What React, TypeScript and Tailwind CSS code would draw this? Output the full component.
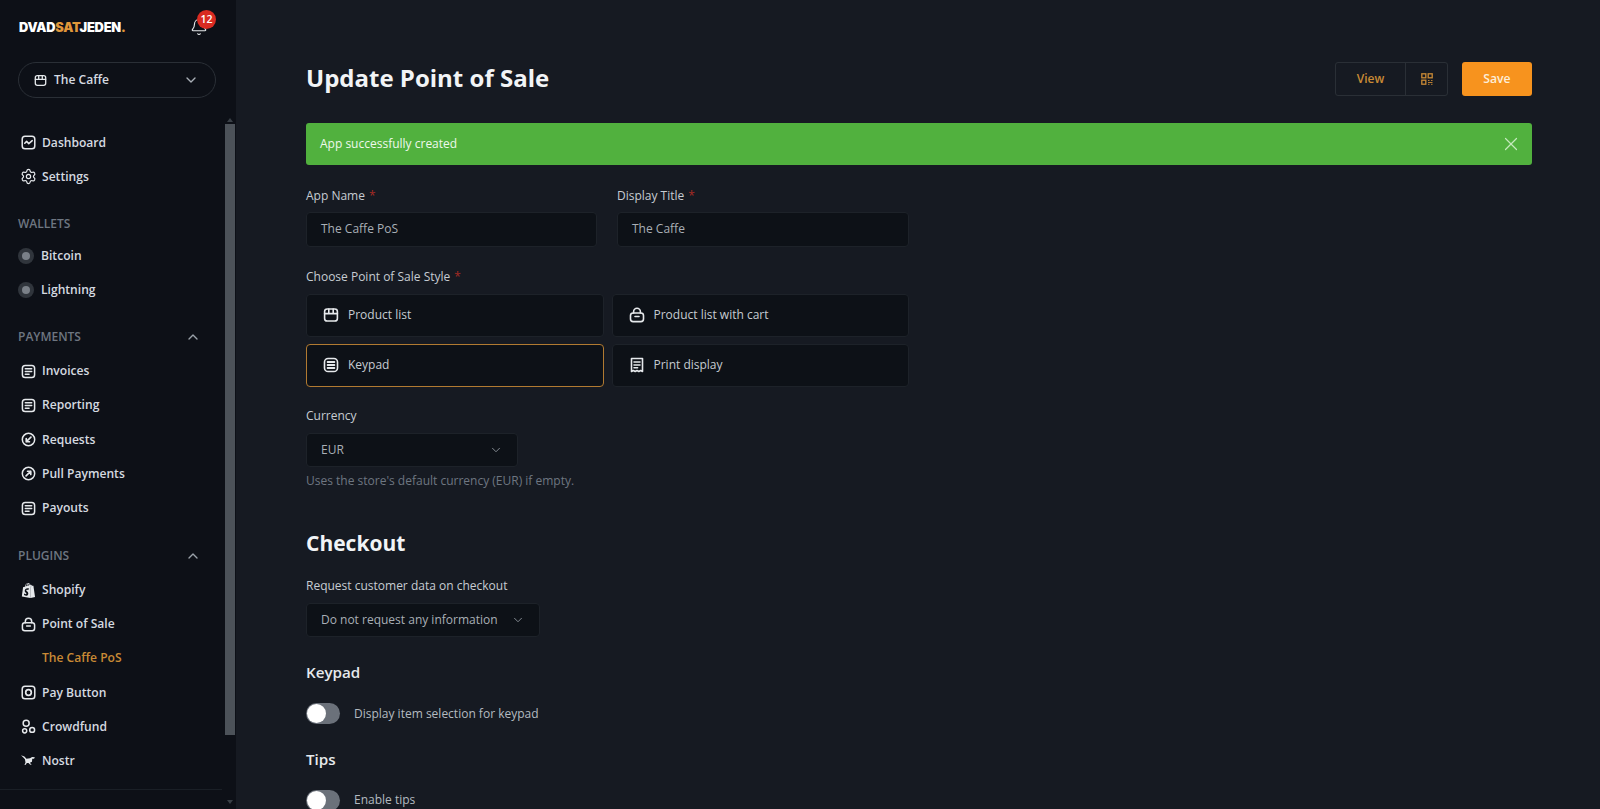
import { Bell, ChevronDown, ChevronUp, Settings, X } from "lucide-react";
import { SiShopify } from "react-icons/si";
import type { ReactNode } from "react";

type IP = { className?: string };
const S = ({ className, children }: IP & { children: ReactNode }) => (
  <svg viewBox="0 0 16 16" fill="none" stroke="currentColor" strokeWidth="1.6" strokeLinecap="round" strokeLinejoin="round" className={className}>{children}</svg>
);
const Dash = (p: IP) => <S {...p}><rect x="1.3" y="1.3" width="13.4" height="13.4" rx="3" /><path d="M4 8.8l2-2 2.3 2.4L12 6" /></S>;
const Doc = (p: IP) => <S {...p}><rect x="1.5" y="1.5" width="13" height="13" rx="3" /><path d="M4.6 5h6.8M4.6 8h6.8M4.6 11h4" /></S>;
const ReqI = (p: IP) => <S {...p}><circle cx="8" cy="8" r="6.6" /><path d="M10.6 5.4L5.6 10.4M5.6 7v3.4H9" strokeWidth="1.8" /></S>;
const PullI = (p: IP) => <S {...p}><circle cx="8" cy="8" r="6.6" /><path d="M5.4 10.6l5-5M7 5.6h3.4V9" strokeWidth="1.8" /></S>;
const Bag = (p: IP) => <S {...p}><rect x="1.5" y="6" width="13" height="8.6" rx="2.6" /><path d="M4.6 6V4.7a3.4 3.4 0 0 1 6.8 0V6M6 9.5h4" /></S>;
const PayB = (p: IP) => <S {...p}><rect x="1.3" y="1.3" width="13.4" height="13.4" rx="3" /><circle cx="8" cy="8" r="3" strokeWidth="1.8" /></S>;
const Crowd = (p: IP) => <S {...p}><circle cx="5.5" cy="4.4" r="3.2" /><circle cx="3.9" cy="12.6" r="2.2" /><circle cx="11.9" cy="11.6" r="2.6" /></S>;
const Ostrich = (p: IP) => (
  <svg viewBox="0 0 16 16" fill="currentColor" className={p.className}>
    <path d="M0 2.5l3.6 1.2 2.2 2.4 3.8-.6 2.2-1.3 3 0.4-.9 1.4-1.9.2-.3 3-2.2 1.3 1.9 2.2-1.8-.4-1.6-1.7-1.8 0-1.1 1.8-1.4.3 1.1-2.6-.6-3.4L3 5.4z" />
  </svg>
);
const Store = (p: IP) => <S {...p}><rect x="1.6" y="2" width="12.8" height="12" rx="2.6" /><path d="M1.6 6.6h12.8M5.8 2v4.6M10.2 2v4.6" /></S>;
const KeyI = (p: IP) => <S {...p}><rect x="1.5" y="1.5" width="13" height="13" rx="3.6" /><path d="M4.6 5h6.8M4.6 8h6.8M4.6 11h6.8" strokeWidth="1.8" /></S>;
const Print = (p: IP) => <S {...p}><path d="M2.5 14.5V1.5h11v13l-1.8-1-1.9 1-1.8-1-1.8 1-1.9-1z" /><path d="M5 5h6M5 8h6M5 10.8h3.6" /></S>;
const Qr = (p: IP) => (
  <svg viewBox="0 0 12 12" fill="none" stroke="currentColor" strokeWidth="1.3" className={p.className}>
    <rect x="0.8" y="0.8" width="4" height="4" /><rect x="7.2" y="0.8" width="4" height="4" /><rect x="0.8" y="7.2" width="4" height="4" />
    <path d="M7 7.5h1.5M10 7.5h1.5M7 9.5h4.5M7 11.3h1.5M10 11.3h1.5" strokeWidth="0.9" />
  </svg>
);

function Row({ icon, children, gold, tight }: { icon?: ReactNode; children: ReactNode; gold?: boolean; tight?: boolean }) {
  return (
    <div className={`${tight ? "h-[34.1px]" : "h-[34.25px]"} flex items-center gap-[6px] text-[12.1px] font-semibold ${gold ? "text-[#c98a35] pl-[42px]" : "text-[#d5dae0] pl-[21px]"}`}>
      {icon && <span className="w-[15px] h-[15px] flex items-center justify-center text-[#e6e9ec]">{icon}</span>}
      {children}
    </div>
  );
}
function Wallet({ children }: { children: ReactNode }) {
  return (
    <div className="h-[33.5px] flex items-center gap-[7px] pl-[18px] text-[12.1px] font-semibold text-[#d5dae0]">
      <span className="w-[16px] h-[16px] rounded-full bg-[#30353c] flex items-center justify-center"><span className="w-[8px] h-[8px] rounded-full bg-[#7a8088]" /></span>
      {children}
    </div>
  );
}
function Head({ children, chev, className }: { children: ReactNode; chev?: boolean; className?: string }) {
  return (
    <div className={`h-[20px] flex items-center justify-between pl-[18px] pr-[23px] text-[12px] font-semibold text-[#6e7681] ${className ?? ""}`}>
      <span>{children}</span>
      {chev && <ChevronUp className="w-[16px] h-[16px] text-[#9aa1a9]" strokeWidth={2} />}
    </div>
  );
}
const Req = () => <span className="text-[#a52a24] ml-[4px]">*</span>;
const Label = ({ children }: { children: ReactNode }) => <div className="text-[12px] leading-[18px] text-[#c6ccd2]">{children}</div>;
const Field = ({ children, className }: { children: ReactNode; className?: string }) => (
  <div className={`h-[34.5px] rounded-[4px] bg-[#0d1117] border border-[#1d2229] flex items-center pl-[14px] text-[12px] text-[#a9afb6] whitespace-nowrap ${className ?? ""}`}>{children}</div>
);
function Card({ icon, children, active }: { icon: ReactNode; children: ReactNode; active?: boolean }) {
  return (
    <div className={`h-[43px] rounded-[4px] bg-[#0d1117] border flex items-center gap-[9px] pl-[16px] text-[12px] text-[#c6ccd2] ${active ? "border-[#b17a31]" : "border-[#1d2229]"}`}>
      <span className="w-[16px] h-[16px] text-[#e6e9ec]">{icon}</span>{children}
    </div>
  );
}
function Toggle({ children, className }: { children: ReactNode; className?: string }) {
  return (
    <div className={`flex items-center gap-[14px] text-[12px] text-[#b4bac0] ${className ?? ""}`}>
      <span className="w-[34px] h-[21px] rounded-full bg-[#6b717a] flex items-center pl-[1px]"><span className="w-[19px] h-[19px] rounded-full bg-white" /></span>
      {children}
    </div>
  );
}

export default function App() {
  return (
    <div className="h-screen overflow-hidden flex bg-[#161a22] font-['Open_Sans',sans-serif]">
      <aside className="w-[236px] h-full bg-[#0d1017] shrink-0 flex flex-col">
        <div className="h-[62px] pl-[19px] pr-[24px] pb-[6px] flex items-center justify-between shrink-0">
          <div className="font-['Inter',sans-serif] font-black text-[12.8px] tracking-[-0.2px] text-white">DVAD<span className="text-[#e0973a]">SAT</span>JEDEN<span className="text-[#e0973a]">.</span></div>
          <div className="relative w-[20px] h-[20px] mr-[2px]">
            <Bell className="w-[18px] h-[18px] text-[#e6e9ec]" strokeWidth={1.5} />
            <span className="absolute -top-[8px] left-[7px] w-[19px] h-[19px] rounded-full bg-[#d92b22] text-white text-[10.5px] font-semibold flex items-center justify-center">12</span>
          </div>
        </div>
        <div className="mx-[18px] w-[198px] h-[36px] rounded-full border border-[#2a2f36] flex items-center pl-[15px] pr-[16px] text-[12.1px] font-semibold text-[#d5dae0] shrink-0">
          <Store className="w-[13px] h-[13px] mr-[7px] text-[#e6e9ec]" />The Caffe
          <ChevronDown className="ml-auto w-[16px] h-[16px] text-[#a9afb6]" strokeWidth={2} />
        </div>
        <div className="flex-1 flex min-h-0 mt-[19px]">
          <nav className="flex-1 min-w-0 flex flex-col pt-[8.5px]">
            <Row icon={<Dash className="w-[15px] h-[15px]" />}>Dashboard</Row>
            <Row icon={<Settings className="w-[17px] h-[17px] shrink-0" strokeWidth={1.7} />}>Settings</Row>
            <Head className="mt-[19.5px]">WALLETS</Head>
            <div className="mt-[6px]"><Wallet>Bitcoin</Wallet><Wallet>Lightning</Wallet></div>
            <Head chev className="mt-[20px]">PAYMENTS</Head>
            <div className="mt-[7.5px]">
              <Row icon={<Doc className="w-[15px] h-[15px]" />}>Invoices</Row>
              <Row icon={<Doc className="w-[15px] h-[15px]" />}>Reporting</Row>
              <Row icon={<ReqI className="w-[15px] h-[15px]" />}>Requests</Row>
              <Row icon={<PullI className="w-[15px] h-[15px]" />}>Pull Payments</Row>
              <Row icon={<Doc className="w-[15px] h-[15px]" />}>Payouts</Row>
            </div>
            <Head chev className="mt-[21px]">PLUGINS</Head>
            <div className="mt-[7px]">
              <Row tight icon={<SiShopify className="w-[15px] h-[15px]" />}>Shopify</Row>
              <Row tight icon={<Bag className="w-[15px] h-[15px]" />}>Point of Sale</Row>
              <Row tight gold>The Caffe PoS</Row>
              <Row tight icon={<PayB className="w-[15px] h-[15px]" />}>Pay Button</Row>
              <Row tight icon={<Crowd className="w-[15px] h-[15px]" />}>Crowdfund</Row>
              <Row tight icon={<Ostrich className="w-[15px] h-[15px]" />}>Nostr</Row>
            </div>
            <div className="mt-[11.5px] border-t border-[#1a1f26] mr-[2px]" />
          </nav>
          <div className="w-[11px] mr-[1px] flex flex-col items-center shrink-0">
            <span className="mt-[1px] shrink-0 w-0 h-0 border-x-[3px] border-x-transparent border-b-[4px] border-b-[#3a4047]" />
            <span className="mt-[2px] shrink-0 w-[10px] h-[611px] bg-[#4c5259]" />
            <span className="mt-[65px] shrink-0 w-0 h-0 border-x-[3px] border-x-transparent border-t-[4px] border-t-[#3a4047]" />
          </div>
        </div>
      </aside>
      <main className="flex-1 min-w-0 pl-[70px] pr-[68px] pt-[62px]">
        <div className="flex items-center justify-between h-[34px]">
          <h1 className="text-[24px] font-bold text-[#f2f4f6] leading-[32px] mb-[2px]">Update Point of Sale</h1>
          <div className="flex items-center gap-[14px]">
            <div className="flex h-[34px] w-[113px] border border-[#2a2f36] rounded-[3px] text-[#c98a35]">
              <span className="w-[70px] border-r border-[#2a2f36] flex items-center justify-center text-[12px] font-semibold">View</span>
              <span className="flex-1 flex items-center justify-center"><Qr className="w-[12px] h-[12px]" /></span>
            </div>
            <div className="h-[34px] w-[70px] rounded-[3px] bg-[#f7931e] text-[#fdeed9] flex items-center justify-center text-[12.2px] font-semibold">Save</div>
          </div>
        </div>
        <div className="mt-[27px] h-[42px] rounded-[3px] bg-[#51b13e] flex items-center justify-between pl-[14px] pr-[10px] text-[12px] text-[#eef8ec]">
          App successfully created
          <X className="w-[22px] h-[22px] text-[#c5e9bd]" strokeWidth={1.3} />
        </div>
        <div className="mt-[22px] flex gap-[20px] w-[603px]">
          <div className="w-[291px]"><Label>App Name<Req /></Label><Field className="mt-[7px]">The Caffe PoS</Field></div>
          <div className="w-[292px]"><Label>Display Title<Req /></Label><Field className="mt-[7px]">The Caffe</Field></div>
        </div>
        <div className="mt-[21px] w-[603px]">
          <Label>Choose Point of Sale Style<Req /></Label>
          <div className="mt-[8px] grid grid-cols-2 gap-x-[8px] gap-y-[7px]">
            <Card icon={<Store className="w-[16px] h-[16px]" />}>Product list</Card>
            <Card icon={<Bag className="w-[16px] h-[16px]" />}>Product list with cart</Card>
            <Card active icon={<KeyI className="w-[16px] h-[16px]" />}>Keypad</Card>
            <Card icon={<Print className="w-[16px] h-[16px]" />}>Print display</Card>
          </div>
        </div>
        <div className="mt-[20.5px]">
          <Label>Currency</Label>
          <Field className="mt-[7.5px] w-[212px] pr-[14px] justify-between">EUR<ChevronDown className="w-[14px] h-[14px] text-[#8b9199]" strokeWidth={1.6} /></Field>
          <div className="mt-[3.5px] text-[12px] leading-[20px] text-[#6e7681]">Uses the store's default currency (EUR) if empty.</div>
        </div>
        <h2 className="mt-[37px] text-[21px] leading-[30px] font-bold text-[#f2f4f6]">Checkout</h2>
        <div className="mt-[19px]">
          <Label>Request customer data on checkout</Label>
          <Field className="mt-[8px] w-[234px] pr-[14px] justify-between">Do not request any information<ChevronDown className="w-[14px] h-[14px] text-[#8b9199]" strokeWidth={1.6} /></Field>
        </div>
        <h3 className="mt-[24px] text-[15.2px] leading-[22px] font-semibold text-[#e6e9ec]">Keypad</h3>
        <Toggle className="mt-[20px]">Display item selection for keypad</Toggle>
        <h3 className="mt-[24px] text-[15.2px] leading-[22px] font-semibold text-[#e6e9ec]">Tips</h3>
        <Toggle className="mt-[19.5px]">Enable tips</Toggle>
      </main>
    </div>
  );
}
